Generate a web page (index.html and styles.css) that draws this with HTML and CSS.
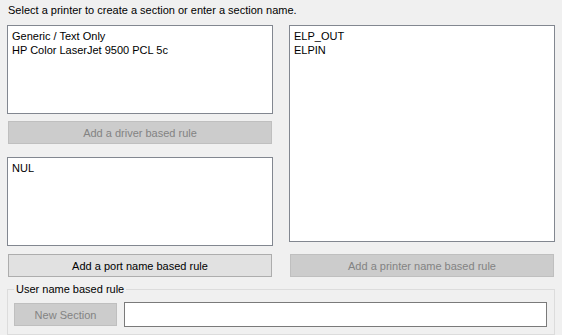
FILE: index.html
```html
<!DOCTYPE html>
<html lang="en">
<head>
    <meta charset="UTF-8">
    <title>Sections</title>
    <link rel="stylesheet" href="styles.css">
</head>
<body>
    <p class="hint">Select a printer to create a section or enter a section name.</p>
    <div class="columns">
        <div class="col">
            <ul class="listbox drivers">
                <li>Generic / Text Only</li>
                <li>HP Color LaserJet 9500 PCL 5c</li>
            </ul>
            <button class="btn" disabled>Add a driver based rule</button>
            <ul class="listbox ports">
                <li>NUL</li>
            </ul>
            <button class="btn">Add a port name based rule</button>
        </div>
        <div class="col">
            <ul class="listbox printers">
                <li>ELP_OUT</li>
                <li>ELPIN</li>
            </ul>
            <button class="btn" disabled>Add a printer name based rule</button>
        </div>
    </div>
    <fieldset class="group">
        <legend>User name based rule</legend>
        <div class="group-row">
            <button class="btn new-section" disabled>New Section</button>
            <input type="text" class="textbox">
        </div>
    </fieldset>
</body>
</html>
```

FILE: styles.css
```css
body {
    font-family: "Liberation Sans", Arial, sans-serif;
    font-size: 11px;
    background-color: #f0f0f0;
    color: #000;
    margin: 0;
    padding: 4px 7px 0 7px;
}
.hint {
    margin: 0 0 8px 1px;
    line-height: 13px;
}
.columns {
    display: grid;
    grid-template-columns: 266px 266px;
    column-gap: 16px;
}
.col {
    display: flex;
    flex-direction: column;
}
.listbox {
    list-style-type: none;
    margin: 0;
    padding: 3px 4px;
    background-color: #fff;
    border: 1px solid #828790;
    box-sizing: border-box;
}
.listbox li {
    line-height: 14px;
}
.drivers {
    height: 89px;
}
.ports {
    height: 89px;
    margin-top: 13px;
}
.printers {
    height: 217px;
}
.btn {
    font-family: inherit;
    font-size: 11px;
    height: 23px;
    margin: 7px 1px 0 1px;
    padding: 0;
    box-sizing: border-box;
    background-color: #e1e1e1;
    border: 1px solid #adadad;
    color: #000;
}
.btn:disabled {
    background-color: #cccccc;
    border-color: #bfbfbf;
    color: #838383;
}
.ports + .btn {
    margin-top: 8px;
}
.printers + .btn {
    margin-top: 12px;
}
.group {
    margin: 6px 0 0 0;
    padding: 6px 6px 7px 6px;
    border: 1px solid #dcdcdc;
    width: 548px;
    box-sizing: border-box;
}
.group legend {
    padding: 0 2px;
    line-height: 13px;
}
.group-row {
    display: flex;
    gap: 7px;
    align-items: center;
}
.new-section {
    width: 103px;
    margin: 0;
}
.textbox {
    flex: 1;
    height: 25px;
    box-sizing: border-box;
    margin: 0 1px 0 0;
    border: 1px solid #7a7a7a;
    background-color: #fff;
    font-family: inherit;
    font-size: 11px;
}
```
